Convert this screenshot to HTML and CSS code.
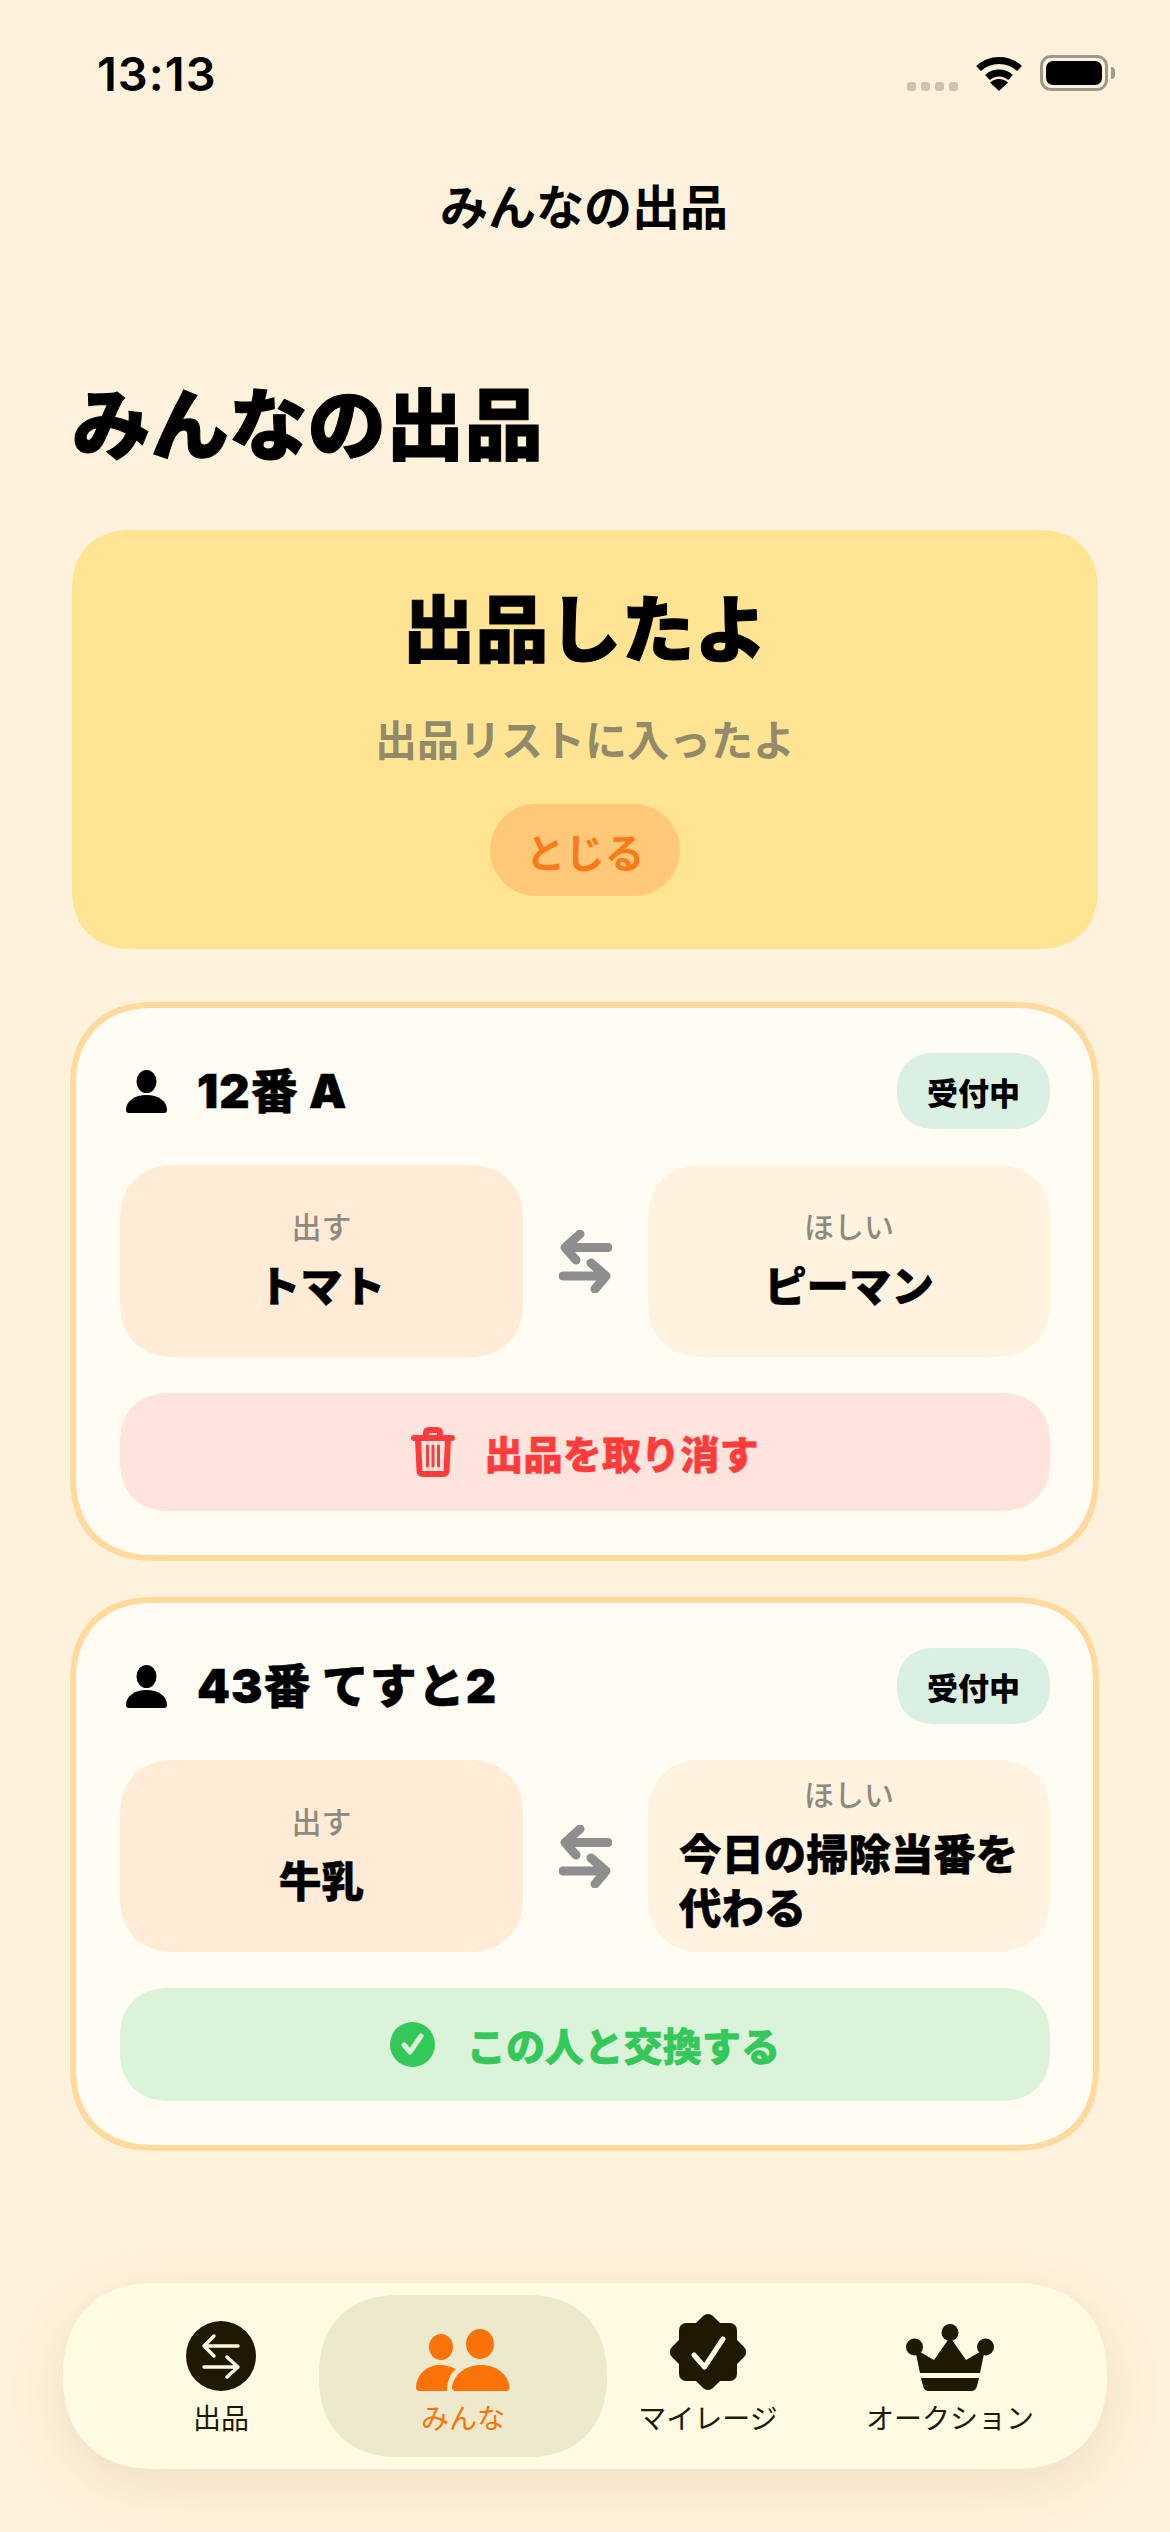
FILE: index.html
```html
<!DOCTYPE html>
<html lang="ja">
<head>
<meta charset="utf-8">
<title>みんなの出品</title>
<link rel="stylesheet" href="styles.css">
</head>
<body>
<div class="screen">
  <header class="status">
    <span class="time">13:13</span>
    <div class="status-icons">
      <div class="signal"><i></i><i></i><i></i><i></i></div>
      <svg class="wifi" viewBox="0 0 48 36"><path d="M3.500 13.500A30 30 0 0 1 44.500 13.500" fill="none" stroke="#000" stroke-width="7"/><path d="M12.500 22.500A17 17 0 0 1 35.500 22.500" fill="none" stroke="#000" stroke-width="7"/><path d="M24 36L15 27.500A13 13 0 0 1 33 27.500Z"/></svg>
      <div class="battery"><div class="battery-fill"></div></div>
      <div class="battery-cap"></div>
    </div>
  </header>
  <div class="navtitle">みんなの出品</div>
  <main class="content">
    <h1 class="page-title">みんなの出品</h1>
    <section class="banner">
      <h2 class="banner-title">出品したよ</h2>
      <p class="banner-sub">出品リストに入ったよ</p>
      <div class="banner-close">とじる</div>
    </section>
    <article class="card">
      <div class="card-head">
        <div class="user">
          <svg class="person" viewBox="0 0 41 43"><ellipse cx="20.500" cy="11.500" rx="10" ry="11.500"/><path d="M0 40C0 31 9 25 20.500 25C32 25 41 31 41 40Q41 43 38 43H3Q0 43 0 40Z"/></svg>
          <span class="user-name">12番 A</span>
        </div>
        <span class="pill">受付中</span>
      </div>
      <div class="trade">
        <div class="box box-give"><span class="box-label">出す</span><span class="box-value">トマト</span></div>
        <svg class="swap" viewBox="0 0 53 63"><path d="M49 17.500H7M21 4L6 17.500L17 30" fill="none" stroke="#8e8e8e" stroke-width="9" stroke-linecap="round" stroke-linejoin="round"/><path d="M4 46H46M32 33L47 46L36 59" fill="none" stroke="#8e8e8e" stroke-width="9" stroke-linecap="round" stroke-linejoin="round"/></svg>
        <div class="box box-want"><span class="box-label">ほしい</span><span class="box-value">ピーマン</span></div>
      </div>
      <button class="action action-cancel">
        <svg class="trash" viewBox="0 0 44 50"><path d="M3 11H41M15 10V6Q15 3 18 3H26Q29 3 29 6V10" fill="none" stroke="#ff3b3b" stroke-width="6" stroke-linecap="round"/><path d="M7 12L8.500 44Q8.800 47 12 47H32Q35.200 47 35.500 44L37 12" fill="none" stroke="#ff3b3b" stroke-width="6"/><path d="M16.500 19V39M22 19V39M27.500 19V39" stroke="#ff3b3b" stroke-width="3" stroke-linecap="round"/></svg>
        <span>出品を取り消す</span>
      </button>
    </article>
    <article class="card">
      <div class="card-head">
        <div class="user">
          <svg class="person" viewBox="0 0 41 43"><ellipse cx="20.500" cy="11.500" rx="10" ry="11.500"/><path d="M0 40C0 31 9 25 20.500 25C32 25 41 31 41 40Q41 43 38 43H3Q0 43 0 40Z"/></svg>
          <span class="user-name">43番 てすと2</span>
        </div>
        <span class="pill">受付中</span>
      </div>
      <div class="trade">
        <div class="box box-give"><span class="box-label">出す</span><span class="box-value">牛乳</span></div>
        <svg class="swap" viewBox="0 0 53 63"><path d="M49 17.500H7M21 4L6 17.500L17 30" fill="none" stroke="#8e8e8e" stroke-width="9" stroke-linecap="round" stroke-linejoin="round"/><path d="M4 46H46M32 33L47 46L36 59" fill="none" stroke="#8e8e8e" stroke-width="9" stroke-linecap="round" stroke-linejoin="round"/></svg>
        <div class="box box-want"><span class="box-label">ほしい</span><span class="box-value">今日の掃除当番を代わる</span></div>
      </div>
      <button class="action action-accept">
        <svg class="check" viewBox="0 0 45 45"><circle cx="22.500" cy="22.500" r="22.500" fill="#34c759"/><path d="M14 23L20 30L31 14" fill="none" stroke="#dbf3d8" stroke-width="5" stroke-linecap="round" stroke-linejoin="round"/></svg>
        <span>この人と交換する</span>
      </button>
    </article>
  </main>
  <nav class="tabbar">
    <div class="tab">
      <svg class="tab-icon" width="70" height="70" viewBox="0 0 70 70"><circle cx="35" cy="35" r="35" fill="#201800"/><path d="M52 25H18M28 15L18 25L28 35M18 46H52M41 36L52 46L41 56" fill="none" stroke="#fffbe3" stroke-width="3.500" stroke-linecap="round" stroke-linejoin="round"/></svg>
      <span class="tab-label">出品</span>
    </div>
    <div class="tab tab-active">
      <svg class="tab-icon" width="94" height="62" viewBox="0 0 94 62"><ellipse cx="25" cy="18" rx="12" ry="13" fill="#fa7308"/><ellipse cx="64" cy="15" rx="14" ry="15" fill="#fa7308"/><path d="M0 58C1 44 12 36 24 36C29 36 33 37 40 40C35 44 31 51 31 62H3Q0 62 0 58Z" fill="#fa7308"/><path d="M36 58C38 45 50 36 65 36C80 36 92 45 93.500 58Q93.500 62 90 62H39Q36 62 36 58Z" fill="#fa7308"/></svg>
      <span class="tab-label">みんな</span>
    </div>
    <div class="tab">
      <svg class="tab-icon" width="78" height="78" viewBox="0 0 78 78"><rect x="10" y="10" width="58" height="58" rx="7" fill="#201800"/><rect x="10" y="10" width="58" height="58" rx="7" fill="#201800" transform="rotate(45 39 39)"/><path d="M25 42L35.500 54L54 26" fill="none" stroke="#fffbe3" stroke-width="5" stroke-linecap="round" stroke-linejoin="round"/></svg>
      <span class="tab-label">マイレージ</span>
    </div>
    <div class="tab">
      <svg class="tab-icon" width="88" height="67" viewBox="0 0 88 67"><g fill="#201800"><circle cx="44" cy="8.500" r="8.500"/><circle cx="8.500" cy="23" r="8.500"/><circle cx="79.500" cy="23" r="8.500"/><path d="M9 25L14 49H74L79 25L60 36L44 13L28 36Z"/><path d="M15 54H73L71 62Q70 67 65 67H23Q18 67 17 62Z"/></g></svg>
      <span class="tab-label">オークション</span>
    </div>
  </nav>
</div>
</body>
</html>
```
FILE: styles.css
```css
* { box-sizing: border-box; }
html, body { margin: 0; padding: 0; }
body {
  background: #fff2dc;
  font-family: "Inter", "Noto Sans CJK JP", sans-serif;
  color: #000;
}
.screen {
  position: relative;
  width: 1170px;
  height: 2532px;
  overflow: hidden;
}
.status {
  display: flex;
  justify-content: space-between;
  align-items: flex-start;
  height: 166px;
  padding: 46px 55px 0 97px;
}
.time { font-size: 47px; font-weight: 600; line-height: 56px; letter-spacing: 1px; }
.status-icons { display: flex; align-items: flex-start; padding-top: 9px; }
.signal { display: flex; gap: 5px; margin-top: 27px; margin-right: 17px; }
.signal i { width: 9px; height: 9px; border-radius: 3px; background: #cdc3b0; }
.wifi { width: 48px; height: 36px; margin-right: 17px; fill: #000; }
.battery {
  width: 68px; height: 36px; padding: 3px;
  border: 3px solid #a0988a; border-radius: 11px;
}
.battery-fill { width: 100%; height: 100%; background: #000; border-radius: 7px; }
.battery-cap {
  width: 4px; height: 12px; margin: 12px 0 0 3px;
  background: #a0988a; border-radius: 0 4px 4px 0;
}
.navtitle {
  height: 84px;
  text-align: center;
  font-size: 48px;
  font-weight: 700;
  line-height: 84px;
  margin-left: -2px;
}
.content {
  display: flex;
  flex-direction: column;
  padding: 0 72px;
}
.page-title {
  margin: 124px 0 52px;
  font-size: 78.500px;
  font-weight: 900;
  line-height: 104px;
  height: 104px;
  -webkit-text-stroke: 1px #000;
}
.banner {
  display: flex;
  flex-direction: column;
  align-items: center;
  height: 419px;
  margin-bottom: 53px;
  padding-top: 58px;
  background: #ffe593;
  border-radius: 60px;
  corner-shape: superellipse(1.2);
}
.banner-title { margin: 0; font-size: 73px; font-weight: 900; line-height: 84px; -webkit-text-stroke: 1px #000; }
.banner-sub { margin: 41px 0 0; font-size: 42px; font-weight: 700; line-height: 56px; color: #928a69; }
.banner-close {
  display: flex; align-items: center; justify-content: center;
  width: 190px; height: 92px; margin-top: 35px;
  border-radius: 46px;
  background: #ffc878;
  color: #fa7a1a;
  font-size: 39.500px; font-weight: 700;
}
.card {
  display: flex;
  flex-direction: column;
  gap: 36px;
  margin: 0 -1px 36px -2px;
  padding: 45px 43px 44px 44px;
  background: #fffdf3;
  border: 6px solid #ffda9e;
  border-radius: 84px;
  corner-shape: superellipse(1.2);
}
.card-head { display: flex; justify-content: space-between; align-items: center; height: 76px; }
.user { display: flex; align-items: center; gap: 30px; padding-left: 6px; }
.person { width: 41px; height: 43px; fill: #000; }
.user-name { font-size: 47px; font-weight: 900; line-height: 56px; letter-spacing: 1px; -webkit-text-stroke: 0.500px #000; }
.pill {
  display: flex; align-items: center; justify-content: center;
  width: 153px; height: 76px;
  border-radius: 38px;
  background: #d9f0e3;
  font-size: 31px; font-weight: 800;
  corner-shape: superellipse(1.2);
}
.trade {
  display: grid;
  grid-template-columns: 403px 1fr 402px;
  align-items: stretch;
}
.swap { width: 53px; height: 63px; align-self: center; justify-self: center; }
.box {
  display: flex;
  flex-direction: column;
  align-items: center;
  justify-content: center;
  gap: 14px;
  min-height: 192px;
  padding: 16px 31px;
  border-radius: 56px;
  corner-shape: superellipse(1.2);
}
.box-give { background: #ffebd6; }
.box-want { background: #fff3df; }
.box-label { font-size: 30px; font-weight: 500; line-height: 38px; color: #8e8a80; }
.box-value { font-size: 42.400px; font-weight: 900; line-height: 54px; -webkit-text-stroke: 0.500px #000; }
.action {
  display: flex;
  align-items: center;
  justify-content: center;
  width: 100%;
  padding: 34px 0;
  border: 0;
  border-radius: 50px;
  corner-shape: superellipse(1.2);
  font-family: inherit;
  font-size: 39.200px;
  font-weight: 900;
  line-height: 45px;
}
.action span { position: relative; top: 2px; -webkit-text-stroke: 0.500px currentColor; }
.action-cancel { gap: 29px; background: #ffe4de; color: #ff3b3b; }
.action-accept { gap: 32px; background: #dbf3d8; color: #34c759; }
.trash { width: 44px; height: 50px; }
.check { width: 45px; height: 45px; }
.tabbar {
  position: absolute;
  left: 63px;
  top: 2283px;
  width: 1044px;
  height: 186px;
  display: grid;
  grid-template-columns: 196px 288px 202px 282px;
  padding: 12px 0 12px 60px;
  background: #fffbe3;
  border-radius: 93px;
  corner-shape: superellipse(1.2);
  box-shadow: 0 16px 60px rgba(120, 80, 20, 0.12);
}
.tab {
  display: flex;
  flex-direction: column;
  align-items: center;
  justify-content: flex-end;
  padding-bottom: 20px;
  color: #201800;
}
.tab-active { background: #eee9cc; border-radius: 81px; corner-shape: superellipse(1.2); color: #fa7308; }
.tab-icon { display: block; margin-bottom: 10px; }
.tab-label { font-size: 28px; font-weight: 400; line-height: 36px; white-space: nowrap; }
```
